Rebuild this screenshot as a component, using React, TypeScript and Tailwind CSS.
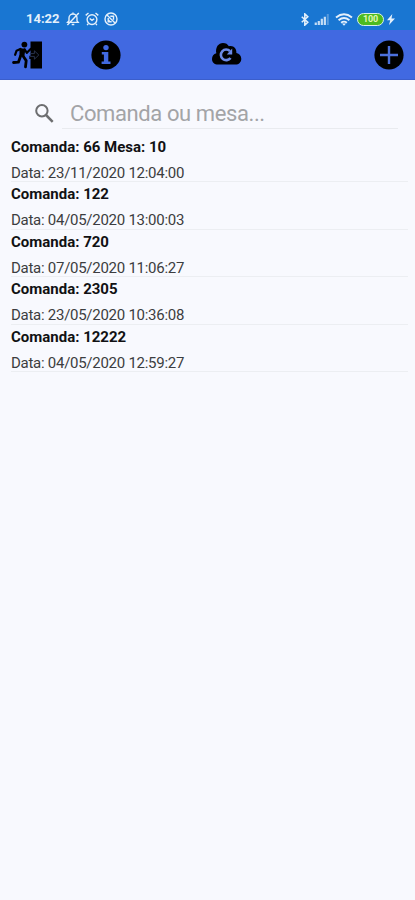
import { useState } from 'react'

type Order = { title: string; date: string }

const ORDERS: Order[] = [
  { title: 'Comanda: 66 Mesa: 10', date: '23/11/2020 12:04:00' },
  { title: 'Comanda: 122', date: '04/05/2020 13:00:03' },
  { title: 'Comanda: 720', date: '07/05/2020 11:06:27' },
  { title: 'Comanda: 2305', date: '23/05/2020 10:36:08' },
  { title: 'Comanda: 12222', date: '04/05/2020 12:59:27' },
]

export default function App() {
  const [query, setQuery] = useState('')
  const visible = ORDERS.filter(o => o.title.toLowerCase().includes(query.toLowerCase()))

  return (
    <div className="flex h-[900px] w-[415px] flex-col overflow-hidden bg-[#f8f9fe] font-['Roboto',sans-serif]">
      <StatusBar />
      <Toolbar />

      <main className="flex flex-col pt-[19px]">
        <div className="flex h-[31px] items-start pl-[34px] pr-[17px]">
          <svg viewBox="0 0 20 20" className="mt-1 h-5 w-5 shrink-0" fill="none" stroke="#6d6e70" strokeWidth="2">
            <circle cx="7.9" cy="7.7" r="5.7" />
            <path d="m12 12 6.7 6.8" strokeWidth="2.5" />
          </svg>
          <input
            value={query}
            onChange={e => setQuery(e.target.value)}
            placeholder="Comanda ou mesa..."
            className="ml-2 h-[30px] min-w-0 flex-1 border-b border-[#e9ebef] px-2 text-[22px] tracking-[-0.4px] text-[#333] outline-none placeholder:text-[#a3a4a7]"
          />
        </div>

        <ul className="pl-[11px] pr-[7px] pt-[5px]">
          {visible.map(o => (
            <OrderRow key={o.title} order={o} />
          ))}
        </ul>
      </main>
    </div>
  )
}

function OrderRow({ order }: { order: Order }) {
  return (
    <li className="h-[47.4px] border-b border-[#eceef2] pt-[3px] text-[15px] leading-[18px]">
      <p className="font-bold whitespace-nowrap text-[#111113]">{order.title}</p>
      <p className="mt-[8px] tracking-[-0.27px] whitespace-nowrap text-[#3c3d40]">Data: {order.date}</p>
    </li>
  )
}

function StatusBar() {
  return (
    <div className="flex h-[30px] shrink-0 items-center justify-between bg-[#1976d2] pt-[8px] pr-[20px] pl-[26px] text-[#e4f0fb]">
      <div className="flex items-center">
        <span className="w-[40px] text-[13px] leading-4 font-bold">14:22</span>
        <MutedBellIcon />
        <AlarmIcon />
        <BlockedIcon />
      </div>
      <div className="flex items-center">
        <svg viewBox="0 0 10 14" className="h-[13px] w-[10px]" fill="none" stroke="currentColor" strokeWidth="1.7">
          <path d="m1.5 4 6.5 6-3.2 3V1L8 4l-6.5 6" />
        </svg>
        <svg viewBox="0 0 16 12" className="ml-[4px] h-[11px] w-4" fill="currentColor">
          <path d="M0 9.4h2.4V12H0zM3.3 7.6h2.4V12H3.3zM6.6 5.3H9V12H6.6zM9.9 3h2.4v9H9.9z" opacity=".85" />
          <path d="M13.2 0h2.2v12h-2.2z" opacity=".3" />
        </svg>
        <svg viewBox="0 0 18 13" className="ml-[5px] h-[13px] w-[18px]" fill="none" stroke="currentColor" strokeWidth="1.9">
          <path d="M1 4.5q8-6.5 16 0M3.6 7.2q5.4-4.4 10.8 0M6.1 9.7q2.9-2.2 5.8 0" />
          <path d="m7 10.6 2 2.2 2-2.2z" fill="currentColor" stroke="none" />
        </svg>
        <span className="ml-[4px] flex h-[13px] w-[27px] items-center justify-center rounded-full border-[1.5px] border-[#d8efe9] bg-[#4dbb20] text-[9px] leading-none font-bold tracking-[-0.2px] text-[#e2f8b6]">
          100
        </span>
        <svg viewBox="0 0 8 11" className="ml-[3px] h-[11px] w-[8px]" fill="currentColor">
          <path d="M5.3 0 0 6.2h3.2L2 11l6-6.5H4.5z" />
        </svg>
      </div>
    </div>
  )
}

function Toolbar() {
  return (
    <header className="flex h-[50px] shrink-0 items-center border-b border-[#3b5ecb] bg-[#4169e1] pl-[12px] text-black">
      <button type="button" aria-label="Sair" className="h-[30px] w-[31px]">
        <ExitIcon />
      </button>
      <button type="button" aria-label="Informações" className="ml-[48px] h-[30px] w-[30px]">
        <svg viewBox="0 0 30 30" className="h-[30px] w-[30px]">
          <circle cx="15" cy="15" r="14.6" />
          <g fill="#4169e1">
            <circle cx="15" cy="7.6" r="2.7" />
            <path d="M10.8 12h6.5v9.4h2.2v2.5h-8.9v-2.5h2.3v-6.9h-2.1z" />
          </g>
        </svg>
      </button>
      <button type="button" aria-label="Sincronizar" className="ml-[90px] h-[26px] w-[31px]">
        <svg viewBox="0 0 31 26" className="h-[26px] w-[31px]">
          <path d="M7.2 22.6C3.3 22.6 1 20.2 1 17c0-2.9 1.7-4.9 4.3-5.7C4.2 5.1 7.5.9 12 .9c2.8 0 4.7 1.2 5.9 3.4 4.6-1.1 7.8 2.1 7.5 6.7 3 .6 4.9 2.8 4.9 5.8 0 3.5-2.4 5.8-5.8 5.8z" />
          <path d="M19 9.2a5.3 5.3 0 1 0 .5 6.7" fill="none" stroke="#6b89e6" strokeWidth="2.6" />
          <path d="M21.2 6.6v5.8h-5.4z" fill="#6b89e6" />
        </svg>
      </button>
      <button type="button" aria-label="Adicionar" className="mr-[11px] ml-auto h-[30px] w-[30px]">
        <svg viewBox="0 0 30 30" className="h-[30px] w-[30px]">
          <circle cx="15" cy="15" r="14.6" />
          <path d="M15 6v18M6 15h18" stroke="#4c70dc" strokeWidth="2.4" />
        </svg>
      </button>
    </header>
  )
}

// runner leaving through an open door
function ExitIcon() {
  return (
    <svg viewBox="0 0 31 30" className="h-[30px] w-[31px]">
      <path d="M18.5 1.5H30v27H18.5V19h-1.2v-3.2h1.2z" />
      <circle cx="12.4" cy="4.6" r="2.9" />
      <path d="m7.5 8.3 6 .4-1.3 8.3-4.7-1z" />
      <g fill="none" stroke="currentColor" strokeLinecap="round" strokeLinejoin="round" strokeWidth="2.2">
        <path d="m8.5 9-4 1.8-1.4 4" />
        <path d="m12.6 9.5 2.3 3.3 3.7-3.9" />
        <path d="m11 16 3.2 4.6-.7 6.3" strokeWidth="2.8" />
        <path d="m8.6 16-2.2 6.2-4.9.3" strokeWidth="2.8" />
      </g>
      <path d="M17.8 13.6h4.6v-2.8l4.4 4.2-4.4 4.2v-2.8h-4.6" fill="none" stroke="#28324c" />
    </svg>
  )
}

function MutedBellIcon() {
  return (
    <svg viewBox="0 0 14 14" className="h-[14px] w-[14px]" fill="none" stroke="currentColor" strokeWidth="1.4">
      <path d="M1.6 10.4h10.6L11 8.8V6a4 4 0 0 0-8 0v2.8zM5.7 12.5h2.6M7 2V.6M12.8 1 1.4 13" />
    </svg>
  )
}

function AlarmIcon() {
  return (
    <svg viewBox="0 0 14 14" className="ml-[5px] h-[14px] w-[14px]" fill="none" stroke="currentColor" strokeWidth="1.4">
      <circle cx="7" cy="7.6" r="4.9" />
      <path d="M.7 3.4 3.5 1M13.3 3.4 10.5 1M4.7 6.5 7 8.4l2.2-1.7M3.3 11.6l-1.2 1.5M10.7 11.6l1.2 1.5" />
    </svg>
  )
}

function BlockedIcon() {
  return (
    <svg viewBox="0 0 14 14" className="ml-[5px] h-[14px] w-[14px]" fill="none" stroke="currentColor" strokeWidth="1.4">
      <circle cx="7" cy="7" r="6" />
      <path d="m3 3 8 8M4.2 7.8 6 9.7M6.3 4.2h3.2v3.5M4.2 6v3.7h3.5" />
    </svg>
  )
}
